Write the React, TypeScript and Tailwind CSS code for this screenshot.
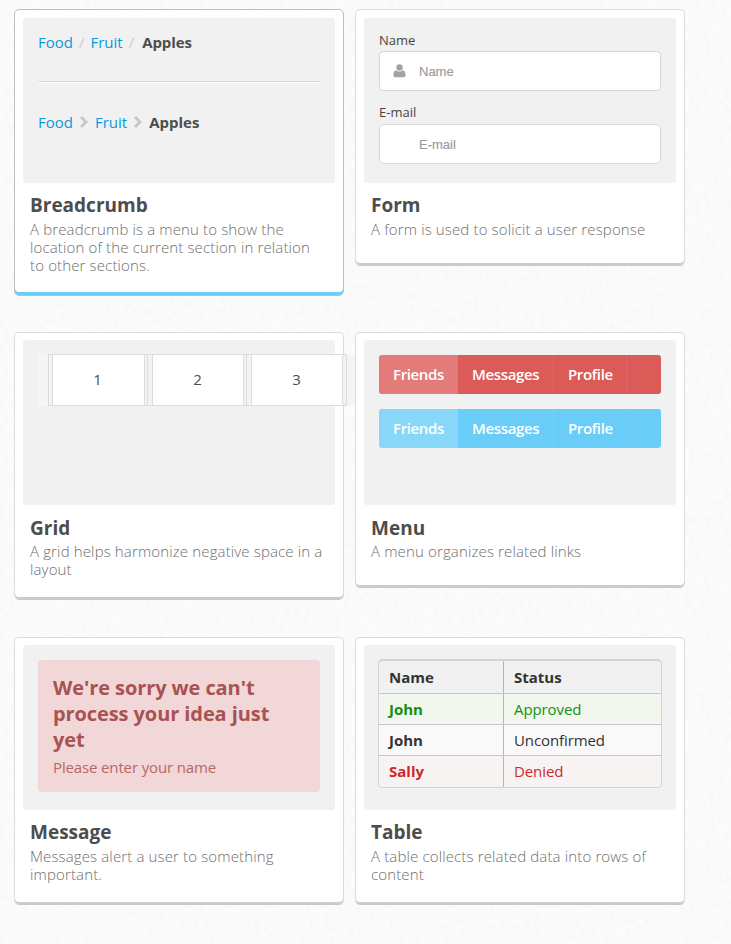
import type { ReactNode } from "react";

type CardProps = {
  title: string;
  text: string;
  height: string;
  top?: string;
  heading?: string;
  active?: boolean;
  children: ReactNode;
};

function Card({ title, text, height, top = "pt-[7px]", heading = "leading-[26px]", active, children }: CardProps) {
  return (
    <section
      className={`relative w-[330px] rounded-[5px] border bg-white px-2 ${top} ${height} ${
        active
          ? "border-[#bfbfbf] shadow-[inset_0_-3px_0_#68cdf7]"
          : "border-[#dcdcdc] border-b-[#c8c8c8] shadow-[inset_0_-2px_0_#cccccc]"
      }`}
    >
      <div className="h-[165px] rounded-[3px] bg-[#f1f1f1] px-[15px]">{children}</div>
      <div className="px-[7px] pt-[9px]">
        <h2 className={`h-[26px] text-[19px] font-bold text-[#4d4d4d] ${heading}`}>{title}</h2>
        <p className="mt-[2px] text-[15px] leading-[18px] font-light tracking-[0.14px] text-[#6e6e6e]">{text}</p>
      </div>
    </section>
  );
}

function Chevron() {
  return (
    <svg className="mx-[7px] h-[14px] w-[8px]" viewBox="0 0 8 14" fill="none" stroke="#c8c8c8" strokeWidth="3">
      <path d="M1 2l5 5-5 5" />
    </svg>
  );
}

function BreadcrumbDemo() {
  return (
    <div className="pt-[14px] text-[15px] leading-[20px] text-[#0998de]">
      <div className="flex whitespace-pre">
        <span>Food</span>
        <span className="mx-[6px] text-[#cccccc]">/</span>
        <span>Fruit</span>
        <span className="mr-[8px] ml-[6px] text-[#cccccc]">/</span>
        <b className="font-bold tracking-[-0.1px] text-[#4d4d4d]">Apples</b>
      </div>
      <div className="mt-[29px] h-[2px] border-t border-b border-t-[#d8d8d8] border-b-white" />
      <div className="mt-[29px] flex items-center">
        <span>Food</span>
        <Chevron />
        <span>Fruit</span>
        <Chevron />
        <b className="font-bold text-[#4d4d4d]">Apples</b>
      </div>
    </div>
  );
}

function Field({ label, icon }: { label: string; icon?: ReactNode }) {
  return (
    <div>
      <div className="text-[13px] leading-[18px] text-[#444444]">{label}</div>
      <div className="flex h-[40px] items-center rounded-[4px] border border-[#d8d8d8] bg-white pl-[13px]">
        <div className="w-[26px]">{icon}</div>
        <span className="pt-px font-['Liberation_Sans',sans-serif] text-[13px] text-[#999999] [-webkit-text-stroke:0.2px_#a6a6a6]">
          {label}
        </span>
      </div>
    </div>
  );
}

function FormDemo() {
  return (
    <div className="pt-[13px] [&>div>div:first-child]:mb-[2px] [&>div+div]:mt-[12px] [&>div+div>div:first-child]:mb-[3px]">
      <Field
        label="Name"
        icon={
          <svg className="h-[14px] w-[13px]" viewBox="0 0 13 14" fill="#a3a3a3">
            <circle cx="6.5" cy="3.5" r="3.2" />
            <path d="M3 6.300C4.900 8 8.100 8 10 6.300C12 6.800 12.700 9 12.500 11.500C12.400 12.700 11.600 13.300 10.500 13.300H2.500C1.400 13.300.6 12.700.5 11.500C.3 9 1 6.800 3 6.300Z" />
          </svg>
        }
      />
      <Field label="E-mail" />
    </div>
  );
}

function GridDemo() {
  return (
    <div className="pt-[14px]">
      <div className="flex h-[52px] w-[317px] bg-linear-to-b from-transparent from-2% via-[#f5f5f5] via-2% to-[#f5f5f5] pl-[10px] text-center text-[15px] leading-[48px] text-[#4d4d4d]">
        <div className="w-[99px] border-y border-l border-[#dcdcdc] bg-[#f3f3f3] pl-[3px]">
          <div className="h-[50px] w-[93px] border-x border-[#dcdcdc] bg-white pr-[2px]">1</div>
        </div>
        <div className="w-[99px] border-y border-l border-[#dcdcdc] bg-[#f3f3f3] pl-[4px]">
          <div className="h-[50px] w-[92px] border-x border-[#dcdcdc] bg-white pr-[1px]">2</div>
        </div>
        <div className="w-[101px] border border-[#dcdcdc] bg-[#f3f3f3] pl-[4px]">
          <div className="h-[50px] w-[92px] border-x border-[#dcdcdc] bg-white pr-[1px]">3</div>
        </div>
      </div>
    </div>
  );
}

function MenuBar({ color }: { color: string }) {
  return (
    <div
      className={`flex h-[39px] overflow-hidden rounded-[3px] text-[15px] leading-[39px] font-semibold tracking-[-0.36px] text-white ${color}`}
    >
      <div className="w-[79px] bg-white/20 pl-[14px]">Friends</div>
      <div className="w-[96px] border-r border-white/8 pl-[14px]">Messages</div>
      <div className="w-[73px] border-r border-white/8 pl-[14px]">Profile</div>
    </div>
  );
}

function MenuDemo() {
  return (
    <div className="flex flex-col gap-[15px] pt-[15px]">
      <MenuBar color="bg-[#db5b59]" />
      <MenuBar color="bg-[#69cdf8]" />
    </div>
  );
}

function MessageDemo() {
  return (
    <div className="pt-[15px]">
      <div className="h-[132px] rounded-[4px] bg-[#f1d7d7] px-[15px] pt-[15px]">
        <div className="text-[20px] leading-[26px] font-bold tracking-[-0.09px] text-[#a95252]">
          We're sorry we can't
          <br />
          process your idea just
          <br />
          yet
        </div>
        <div className="mt-[4px] text-[15px] leading-[20px] tracking-[-0.14px] text-[#b96666]">Please enter your name</div>
      </div>
    </div>
  );
}

function TableDemo() {
  const rows = [
    { name: "John", status: "Approved", style: "bg-[#f1f6ef] text-[#119111] border-b border-[#c6c6c6]" },
    { name: "John", status: "Unconfirmed", style: "bg-[#f9f9f9] text-[#333333] border-b border-[#c6c6c6]" },
    { name: "Sally", status: "Denied", style: "bg-[#f8f3f3] text-[#cd2929]" },
  ];
  return (
    <div className="pt-[14px]">
      <div className="-mx-px overflow-hidden rounded-[5px] border border-t-2 border-[#d3d3d3] text-[15px]">
        <div className="flex h-[33px] border-b border-[#c6c6c6] leading-[32px] font-bold text-[#333333]">
          <div className="w-[125px] border-r border-[#b5b5b5] pl-[10px]">Name</div>
          <div className="pl-[10px]">Status</div>
        </div>
        {rows.map((row, i) => (
          <div key={i} className={`flex h-[31px] leading-[30px] ${row.style}`}>
            <div className="w-[125px] border-r border-[#b5b5b5] pl-[10px] font-bold">{row.name}</div>
            <div className="pl-[10px] tracking-[-0.1px]">{row.status}</div>
          </div>
        ))}
      </div>
    </div>
  );
}

function PaperTexture() {
  return (
    <svg className="absolute inset-0 h-full w-full" aria-hidden="true">
      <filter id="paper" x="0" y="0" width="100%" height="100%">
        <feTurbulence type="fractalNoise" baseFrequency="0.2 0.12" numOctaves="4" seed="8" />
        <feColorMatrix values="0 0 0 0 0.5  0 0 0 0 0.5  0 0 0 0 0.5  0.14 0 0 0 -0.062" />
      </filter>
      <rect width="100%" height="100%" filter="url(#paper)" />
    </svg>
  );
}

export default function App() {
  return (
    <main className="relative h-[944px] w-[731px] overflow-hidden bg-[#fbfbfb] font-['Open_Sans',sans-serif]">
      <PaperTexture />
      <div className="relative grid grid-cols-[330px_330px] grid-rows-[323px_305px_300px] items-start gap-x-[11px] pt-[9px] pl-[14px]">
        <Card title="Breadcrumb" text="A breadcrumb is a menu to show the location of the current section in relation to other sections." height="h-[287px]" top="pt-[8px]" active>
          <BreadcrumbDemo />
        </Card>
        <Card title="Form" text="A form is used to solicit a user response" height="h-[257px]" top="pt-[8px]">
          <FormDemo />
        </Card>
        <Card title="Grid" text="A grid helps harmonize negative space in a layout" height="h-[268px]" heading="leading-[28px]">
          <GridDemo />
        </Card>
        <Card title="Menu" text="A menu organizes related links" height="h-[256px]" heading="leading-[28px]">
          <MenuDemo />
        </Card>
        <Card title="Message" text="Messages alert a user to something important." height="h-[268px]">
          <MessageDemo />
        </Card>
        <Card title="Table" text="A table collects related data into rows of content" height="h-[268px]">
          <TableDemo />
        </Card>
      </div>
    </main>
  );
}
